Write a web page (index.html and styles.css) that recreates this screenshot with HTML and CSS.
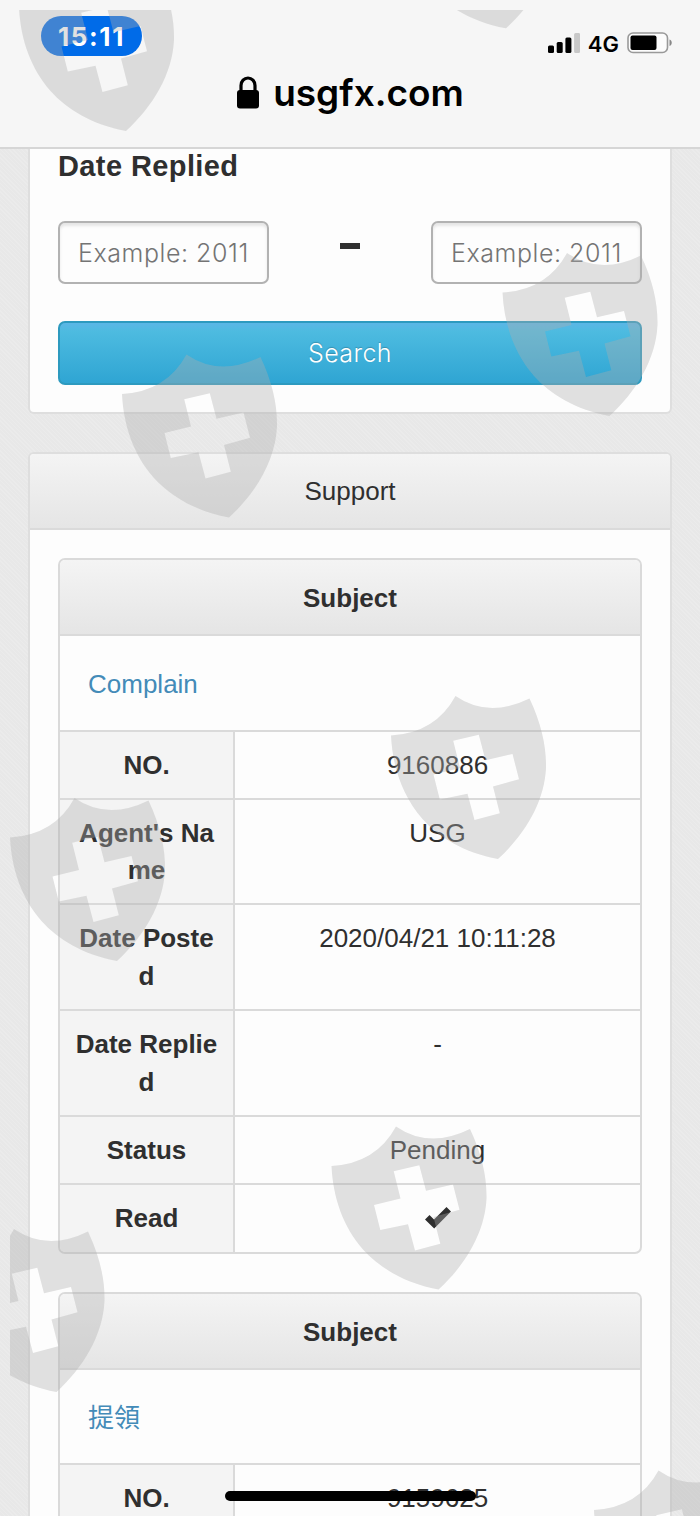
FILE: index.html
```html
<!DOCTYPE html>
<html lang="en">
<head>
  <meta charset="UTF-8" />
  <meta name="viewport" content="width=device-width, initial-scale=1.0"/>
  <title>usgfx.com</title>
  <link rel="stylesheet" href="styles.css">
</head>
<body>
  <div class="screen">
    <header class="browser">
      <div class="status">
        <span class="time">15:11</span>
        <div class="signal">
          <svg class="bars" width="32" height="20" viewBox="0 0 32 20">
            <rect x="0" y="12.5" width="6" height="7.5" rx="1.5"/>
            <rect x="8.7" y="9" width="6" height="11" rx="1.5"/>
            <rect x="17.4" y="4.5" width="6" height="15.5" rx="1.5"/>
            <rect x="26.1" y="0" width="6" height="20" rx="1.5" fill="#c8c8c8"/>
          </svg>
          <span class="network">4G</span>
          <svg class="battery" width="46" height="22" viewBox="0 0 46 22">
            <rect x="1" y="1" width="39.5" height="19.5" rx="5" fill="#fcfcfc" stroke="#999" stroke-width="1.6"/>
            <rect x="3.5" y="3.5" width="26" height="14.5" rx="2"/>
            <path d="M42.5 7.5c3 1 3 5.500 0 6.500z" fill="#888"/>
          </svg>
        </div>
      </div>
      <div class="address">
        <svg class="lock" width="24" height="34" viewBox="0 0 24 34">
          <path d="M5 16V9.500a7 7.500 0 0 1 14 0V16" fill="none" stroke="#000" stroke-width="3.200"/>
          <rect x="1" y="14" width="22" height="18.500" rx="3"/>
        </svg>
        <span class="host">usgfx.com</span>
      </div>
    </header>

    <main>
      <section class="panel search-panel">
        <h3>Date Replied</h3>
        <div class="range">
          <div class="field"><span>Example: 2011</span></div>
          <span class="dash"></span>
          <div class="field"><span>Example: 2011</span></div>
        </div>
        <button class="btn">Search</button>
      </section>

      <section class="panel support">
        <div class="panel-head">Support</div>
        <div class="panel-body">
          <div class="ticket">
            <div class="ticket-head">Subject</div>
            <div class="subject"><a>Complain</a></div>
            <div class="row"><div class="label">NO.</div><div class="value">9160886</div></div>
            <div class="row tall"><div class="label">Agent's Na<br>me</div><div class="value">USG</div></div>
            <div class="row tall"><div class="label">Date Poste<br>d</div><div class="value">2020/04/21 10:11:28</div></div>
            <div class="row tall"><div class="label">Date Replie<br>d</div><div class="value">-</div></div>
            <div class="row"><div class="label">Status</div><div class="value">Pending</div></div>
            <div class="row last"><div class="label">Read</div><div class="value">
              <svg class="check" width="28" height="24" viewBox="0 0 28 24">
                <path d="M1 13.500 5.500 9 10 13.500 22.500 1 27 5.500 10.200 22.500z" fill="#2f2f2f"/>
              </svg>
            </div></div>
          </div>

          <div class="ticket">
            <div class="ticket-head">Subject</div>
            <div class="subject"><a lang="zh-Hant">提領</a></div>
            <div class="row"><div class="label">NO.</div><div class="value">9159625</div></div>
          </div>
        </div>
      </section>
    </main>

    <div class="home-bar"></div>

    <svg class="shields" width="700" height="1516" viewBox="0 0 700 1516">
      <defs>
        <path id="shield" fill-rule="evenodd" d="M65 1Q98 23.700 139 3.500C151 29 156 52 155.500 73C154 107 134 140 107.500 164C74 158 48 142 32 124C12 101 2 72 .5 40.500Q45 38 65 1ZM62.700 45.700 88.300 39.700 95 65.300 122 59 128.500 84.300 102.500 91.500 109.300 118.300 84 125 77 98.700 49.300 104.500 43 79.500 69.500 73Z"/>
        <clipPath id="frame"><rect x="10" y="10" width="690" height="1506"/></clipPath>
      </defs>
      <g clip-path="url(#frame)">
        <use href="#shield" x="18.500" y="-33"/>
        <use href="#shield" x="398.500" y="-135.700"/>
        <use href="#shield" x="121.500" y="353.500"/>
        <use href="#shield" x="502" y="252"/>
        <use href="#shield" x="390.500" y="695"/>
        <use href="#shield" x="9.500" y="797"/>
        <use href="#shield" x="331" y="1125.500"/>
        <use href="#shield" x="-51" y="1228"/>
        <use href="#shield" x="593.500" y="1469.500"/>
      </g>
    </svg>
  </div>
</body>
</html>
```
FILE: styles.css
```css
* {
  box-sizing: border-box;
}
body {
  margin: 0;
  font-family: "Liberation Sans", Arial, "Noto Sans CJK TC", sans-serif;
  font-size: 26px;
  color: #2f2f2f;
}
.screen {
  position: relative;
  width: 700px;
  height: 1516px;
  overflow: hidden;
  background-color: #e9e9e9;
  background-image: repeating-linear-gradient(45deg, #ebebeb 0, #ebebeb 1px, #e8e8e8 1px, #e8e8e8 3px);
}

/* browser bar */
.browser {
  height: 149px;
  padding: 16px 27px 0 41px;
  background: #f6f6f6;
  border-bottom: 2px solid #d6d6d6;
  font-family: Inter, sans-serif;
  color: #000;
}
.status {
  display: flex;
  justify-content: space-between;
  height: 40px;
}
.time {
  width: 101px;
  height: 40px;
  border-radius: 20px;
  background: #006be8;
  color: #fff;
  font-size: 26px;
  font-weight: 700;
  line-height: 42px;
  letter-spacing: 1.6px;
  text-align: center;
}
.signal {
  display: flex;
  align-items: center;
  height: 54px;
}
.network {
  margin: 2px 8px 0 8px;
  font-size: 22px;
  font-weight: 600;
  line-height: 26px;
}
.address {
  display: flex;
  justify-content: center;
  align-items: center;
  gap: 13px;
  height: 74px;
  padding-right: 14px;
}
.host {
  font-size: 37px;
  font-weight: 600;
  line-height: 44px;
}

/* panels */
main {
  padding: 0 28px;
}
.panel {
  background: #fdfdfd;
  border: 2px solid #dedede;
  border-radius: 6px;
}
.search-panel {
  height: 265px;
  margin-bottom: 38px;
  padding: 0 28px;
  border-top: 0;
  border-radius: 0 0 6px 6px;
}
.search-panel h3 {
  margin: 0;
  padding-bottom: 38px;
  font-size: 29px;
  letter-spacing: 0.4px;
  line-height: 34px;
}
.range {
  display: flex;
  justify-content: space-between;
  align-items: center;
  height: 63px;
}
.field {
  width: 211px;
  height: 63px;
  padding: 0 18px;
  border: 2px solid #b2b2b2;
  border-radius: 7px;
  box-shadow: inset 0 3px 3px #e6e6e6;
  overflow: hidden;
  color: #747474;
  font-family: Inter, sans-serif;
  font-size: 25px;
  font-weight: 300;
  letter-spacing: 0.55px;
  line-height: 60px;
  white-space: nowrap;
}
.dash {
  width: 20px;
  height: 6px;
  margin-bottom: 13px;
  background: #2f2f2f;
}
.btn {
  display: block;
  width: 100%;
  height: 64px;
  margin-top: 37px;
  padding: 0;
  border: 2px solid #2d9abf;
  border-radius: 7px;
  background: linear-gradient(#5bb6e6, #4dbbe0 14%, #2fa5d3);
  color: #fff;
  font-family: Inter, sans-serif;
  font-size: 25px;
  font-weight: 300;
  letter-spacing: 0.4px;
  text-shadow: 0 -1px 1px rgba(0, 0, 0, 0.2);
}
.panel-head,
.ticket-head {
  height: 76px;
  border-bottom: 2px solid #dadada;
  background: linear-gradient(#f4f4f4, #e5e5e5);
  line-height: 75px;
  text-align: center;
}
.panel-head {
  border-radius: 4px 4px 0 0;
}
.support {
  height: 1100px;
}
.panel-body {
  padding: 28px;
}

/* ticket tables */
.ticket {
  margin-bottom: 37.500px;
  border: 2px solid #dadada;
  border-radius: 7px;
  overflow: hidden;
}
.ticket-head {
  font-weight: bold;
  line-height: 76px;
}
.subject {
  height: 95.500px;
  padding-left: 28px;
  border-bottom: 2px solid #dadada;
  line-height: 96px;
}
.subject a {
  color: #438bb8;
}
.row {
  display: flex;
  height: 68.400px;
  border-bottom: 2px solid #dadada;
  line-height: 37.500px;
  text-align: center;
}
.row.tall {
  height: 105.600px;
}
.row.last {
  border-bottom: 0;
  height: 67px;
}
.label {
  width: 175px;
  padding-top: 15px;
  border-right: 2px solid #dadada;
  background: #f4f4f4;
  font-weight: bold;
}
.value {
  flex: 1;
  padding-top: 15px;
}
.check {
  display: block;
  margin: 6px auto 0;
}

/* things over the page */
.home-bar {
  position: absolute;
  left: 225px;
  top: 1491px;
  width: 251px;
  height: 10px;
  border-radius: 5px;
  background: #000;
}
.shields {
  position: absolute;
  left: 0;
  top: 0;
  fill: #adadad;
  fill-opacity: 0.37;
}
```
